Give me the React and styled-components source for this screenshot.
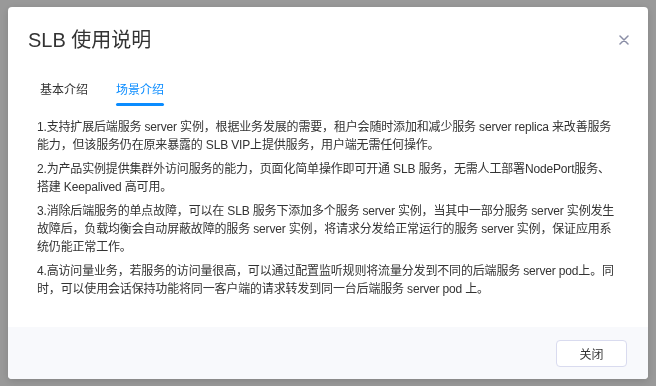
import React, { useState } from "react";
import styled, { createGlobalStyle } from "styled-components";

const Global = createGlobalStyle`
  html, body { margin: 0; padding: 0; }
  body {
    font-family: "Liberation Sans", "Noto Sans CJK SC", sans-serif;
    background: #ffffff;
    width: 656px;
    height: 386px;
    overflow: hidden;
  }
`;

const Overlay = styled.div`
  position: fixed;
  inset: 0;
  background: rgba(0, 0, 0, 0.4);
  display: flex;
  align-items: flex-start;
  justify-content: center;
  padding-top: 7px;
`;

const Dialog = styled.div`
  width: 640px;
  background: #ffffff;
  border-radius: 4px;
  overflow: hidden;
  display: flex;
  flex-direction: column;
  box-shadow: 0 2px 8px rgba(0, 0, 0, 0.15);
`;

const Header = styled.div`
  display: flex;
  align-items: center;
  justify-content: space-between;
  padding: 19px 18px 0 20px;
`;

const Title = styled.h2`
  margin: 0;
  font-size: 20px;
  line-height: 28px;
  font-weight: 400;
  color: #333333;
`;

const CloseBtn = styled.button`
  border: 0;
  background: transparent;
  padding: 0;
  width: 12px;
  height: 12px;
  display: flex;
  align-items: center;
  justify-content: center;
  cursor: pointer;
`;

const TabBar = styled.div`
  display: flex;
  gap: 28px;
  padding: 27px 0 0 32px;
`;

const Tab = styled.div`
  position: relative;
  font-size: 12px;
  line-height: 18px;
  padding-bottom: 7px;
  color: ${(p) => (p.$active ? "#0a8cff" : "#333333")};
  cursor: pointer;
  &::after {
    content: "";
    position: absolute;
    left: 0;
    right: 0;
    bottom: 0;
    height: 3px;
    border-radius: 2px;
    background: ${(p) => (p.$active ? "#0a8cff" : "transparent")};
  }
`;

const Body = styled.div`
  padding: 12px 31px 29px 29px;
`;

const Para = styled.p`
  margin: 0 0 6px;
  font-size: 12px;
  line-height: 18px;
  letter-spacing: -0.165px;
  color: #333333;
  &:last-child { margin-bottom: 0; }
`;

const Footer = styled.div`
  background: #f8f9fc;
  display: flex;
  justify-content: flex-end;
  padding: 13px 21px 12px;
`;

const Button = styled.button`
  width: 71px;
  height: 27px;
  border: 1px solid #d9dbef;
  border-radius: 4px;
  background: #ffffff;
  font-family: inherit;
  font-size: 12px;
  color: #333333;
  cursor: pointer;
`;

const paragraphs = [
  "1.支持扩展后端服务 server 实例，根据业务发展的需要，租户会随时添加和减少服务 server replica 来改善服务能力，但该服务仍在原来暴露的 SLB VIP上提供服务，用户端无需任何操作。",
  "2.为产品实例提供集群外访问服务的能力，页面化简单操作即可开通 SLB 服务，无需人工部署NodePort服务、搭建 Keepalived 高可用。",
  "3.消除后端服务的单点故障，可以在 SLB 服务下添加多个服务 server 实例，当其中一部分服务 server 实例发生故障后，负载均衡会自动屏蔽故障的服务 server 实例，将请求分发给正常运行的服务 server 实例，保证应用系统仍能正常工作。",
  "4.高访问量业务，若服务的访问量很高，可以通过配置监听规则将流量分发到不同的后端服务 server pod上。同时，可以使用会话保持功能将同一客户端的请求转发到同一台后端服务 server pod 上。",
];

export default function App() {
  const [tab, setTab] = useState(1);
  return (
    <>
      <Global />
      <Overlay>
        <Dialog>
          <Header>
            <Title>SLB 使用说明</Title>
            <CloseBtn aria-label="close">
              <svg width="10" height="10" viewBox="0 0 10 10">
                <path d="M1 1L9 9M9 1L1 9" stroke="#8a8ea6" strokeWidth="1.5" strokeLinecap="round" />
              </svg>
            </CloseBtn>
          </Header>
          <TabBar>
            <Tab $active={tab === 0} onClick={() => setTab(0)}>基本介绍</Tab>
            <Tab $active={tab === 1} onClick={() => setTab(1)}>场景介绍</Tab>
          </TabBar>
          <Body>
            {paragraphs.map((t, i) => (
              <Para key={i}>{t}</Para>
            ))}
          </Body>
          <Footer>
            <Button>关闭</Button>
          </Footer>
        </Dialog>
      </Overlay>
    </>
  );
}
